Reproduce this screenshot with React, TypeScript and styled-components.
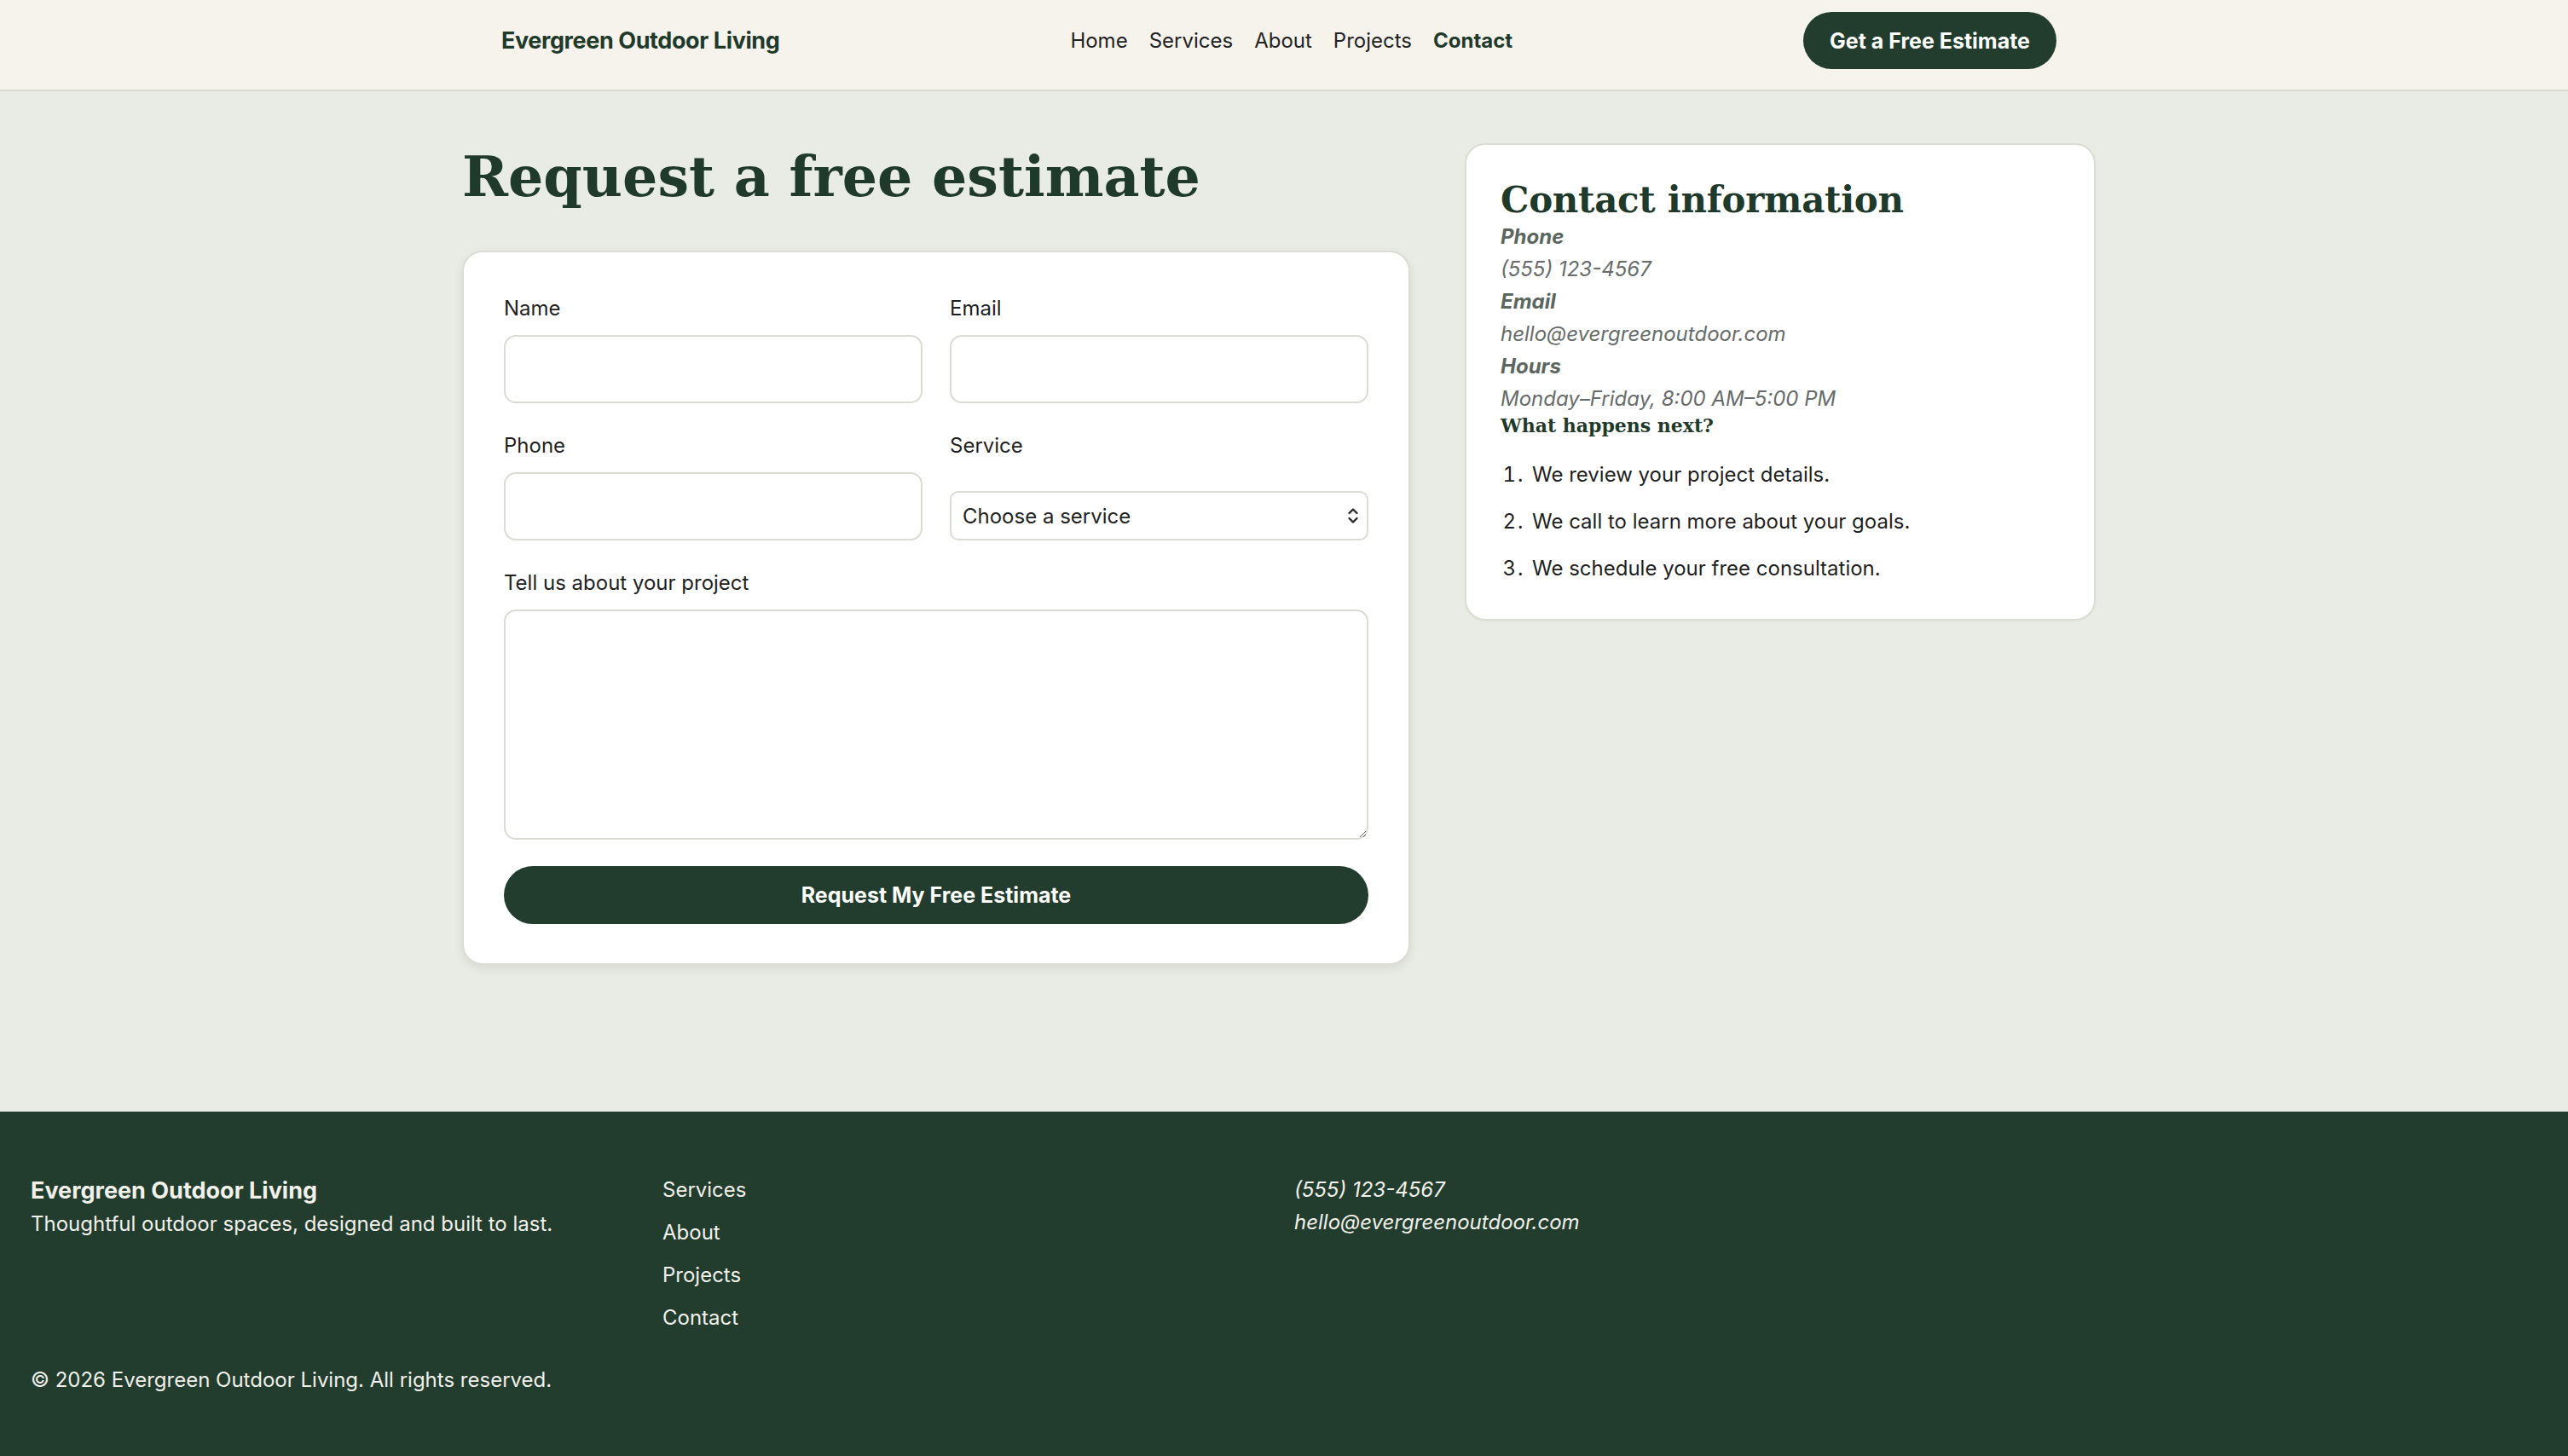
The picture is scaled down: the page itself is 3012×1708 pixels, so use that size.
import styled, { createGlobalStyle } from "styled-components";

const GlobalStyle = createGlobalStyle`
  * {
    box-sizing: border-box;
  }
  body {
    margin: 0;
    background-color: #e9ece5;
    font-family: Inter, "Noto Sans", sans-serif;
    font-size: 24px;
    line-height: 38px;
    color: #1f1f1f;
  }
`;

const Header = styled.header`
  background-color: #f6f3ed;
  border-bottom: 2px solid #dcdcd4;
`;

const Container = styled.div`
  width: 1916px;
  margin-left: calc(50% - 964px);
`;

const HeaderInner = styled(Container)`
  display: flex;
  align-items: center;
  justify-content: space-between;
  padding: 14px 46px 24px;
`;

const Logo = styled.a`
  font-size: 27px;
  font-weight: 700;
  letter-spacing: -0.4px;
  color: #1f3a2b;
  text-decoration: none;
`;

const Nav = styled.nav`
  display: flex;
  gap: 25px;
`;

const NavLink = styled.a<{ $active?: boolean }>`
  font-size: 24px;
  color: ${({ $active }) => ($active ? "#1f3a2b" : "#222")};
  font-weight: ${({ $active }) => ($active ? 700 : 400)};
  text-decoration: none;
`;

const PillButton = styled.button`
  border: none;
  background-color: #223c2e;
  color: #ffffff;
  font-family: Inter, sans-serif;
  font-weight: 700;
  font-size: 25px;
  border-radius: 999px;
  height: 67px;
  padding: 0 31px;
  cursor: pointer;
`;

const Main = styled.main`
  padding: 61px 0 172px;
`;

const Columns = styled(Container)`
  display: grid;
  grid-template-columns: 1112px 1fr;
  gap: 64px;
  align-items: start;
`;

const PageTitle = styled.h1`
  font-family: "DejaVu Serif", "Liberation Serif", serif;
  font-size: 65px;
  line-height: 78px;
  font-weight: 700;
  color: #1f3a2b;
  margin: 0 0 48px;
`;

const Card = styled.div<{ $shadow?: boolean }>`
  background-color: #ffffff;
  border: 2px solid #dcdcd4;
  border-radius: 24px;
  box-shadow: ${({ $shadow }) =>
    $shadow ? "0 4px 12px rgba(0, 0, 0, 0.08)" : "0 1px 3px rgba(0, 0, 0, 0.03)"};
`;

const Form = styled.form`
  display: grid;
  grid-template-columns: 1fr 1fr;
  column-gap: 32px;
  row-gap: 31px;
  padding: 47px 47px 46px;
`;

const Field = styled.label<{ $wide?: boolean }>`
  display: flex;
  flex-direction: column;
  justify-content: space-between;
  gap: 12px;
  grid-column: ${({ $wide }) => ($wide ? "1 / -1" : "auto")};
`;

const LabelText = styled.span`
  font-size: 24px;
  color: #1f1f1f;
`;

const Input = styled.input`
  height: 80px;
  border: 2px solid #dcdcd4;
  border-radius: 14px;
  background: #fff;
  outline: none;
  font-family: Inter, sans-serif;
  font-size: 24px;
  padding: 0 18px;
`;

const SelectWrap = styled.div`
  position: relative;
`;

const Select = styled.select`
  width: 100%;
  height: 58px;
  appearance: none;
  border: 2px solid #dcdcd4;
  border-radius: 10px;
  background: #fff;
  font-family: Inter, sans-serif;
  font-size: 24px;
  color: #222;
  padding: 0 40px 0 13px;
  outline: none;
`;

const SelectIcon = styled.svg`
  position: absolute;
  right: 11px;
  top: 50%;
  transform: translateY(-50%);
  pointer-events: none;
`;

const TextArea = styled.textarea`
  height: 270px;
  border: 2px solid #dcdcd4;
  border-radius: 14px;
  background: #fff;
  outline: none;
  resize: vertical;
  font-family: Inter, sans-serif;
  font-size: 24px;
  padding: 14px 18px;
`;

const SubmitButton = styled(PillButton)`
  grid-column: 1 / -1;
  width: 100%;
  height: 68px;
  font-size: 25px;
`;

const InfoCard = styled(Card)`
  padding: 41px 40px 40px;
`;

const InfoTitle = styled.h2`
  font-family: "DejaVu Serif", "Liberation Serif", serif;
  font-size: 42px;
  line-height: 48px;
  font-weight: 700;
  letter-spacing: -0.3px;
  color: #1f3a2b;
  margin: 0;
`;

const InfoLabel = styled.div`
  font-weight: 700;
  font-style: italic;
  color: #5c6660;
`;

const InfoValue = styled.div`
  font-style: italic;
  color: #676b69;
`;

const SubTitle = styled.h3`
  font-family: "DejaVu Serif", "Liberation Serif", serif;
  font-size: 22px;
  line-height: 28px;
  font-weight: 700;
  color: #1f3a2b;
  margin: -2px 0 0;
`;

const Steps = styled.ol`
  display: flex;
  flex-direction: column;
  gap: 17px;
  margin: 25px 0 0;
  padding-left: 37px;
  color: #1f1f1f;

  li::marker {
    letter-spacing: 2px;
  }
`;

const Footer = styled.footer`
  background-color: #223c2e;
  color: #f1f0ea;
  padding: 73px 36px 80px;
`;

const FooterGrid = styled.div`
  display: grid;
  grid-template-columns: repeat(4, 1fr);
  column-gap: 24px;
`;

const FooterCol = styled.div<{ $gap?: number }>`
  display: flex;
  flex-direction: column;
  gap: ${({ $gap }) => $gap ?? 0}px;
`;

const FooterBrand = styled.div`
  font-size: 27px;
  line-height: 40px;
  font-weight: 700;
`;

const FooterLink = styled.a`
  color: #f1f0ea;
  text-decoration: none;
`;

const FooterItalic = styled.span`
  font-style: italic;
`;

const Copyright = styled.div`
  margin-top: 35px;
`;

export default function App() {
  return (
    <>
      <GlobalStyle />
      <Header>
        <HeaderInner>
          <Logo href="#">Evergreen Outdoor Living</Logo>
          <Nav>
            <NavLink href="#">Home</NavLink>
            <NavLink href="#">Services</NavLink>
            <NavLink href="#">About</NavLink>
            <NavLink href="#">Projects</NavLink>
            <NavLink href="#" $active>
              Contact
            </NavLink>
          </Nav>
          <PillButton>Get a Free Estimate</PillButton>
        </HeaderInner>
      </Header>

      <Main>
        <Columns>
          <section>
            <PageTitle>Request a free estimate</PageTitle>
            <Card $shadow>
              <Form onSubmit={(e) => e.preventDefault()}>
                <Field>
                  <LabelText>Name</LabelText>
                  <Input name="name" />
                </Field>
                <Field>
                  <LabelText>Email</LabelText>
                  <Input name="email" type="email" />
                </Field>
                <Field>
                  <LabelText>Phone</LabelText>
                  <Input name="phone" />
                </Field>
                <Field>
                  <LabelText>Service</LabelText>
                  <SelectWrap>
                    <Select defaultValue="">
                      <option value="">Choose a service</option>
                      <option>Landscape design</option>
                      <option>Patios &amp; hardscaping</option>
                      <option>Decks &amp; pergolas</option>
                    </Select>
                    <SelectIcon width="14" height="24" viewBox="0 0 14 24">
                      <path
                        d="M2.5 9 L7 4.5 L11.5 9 M2.5 15 L7 19.5 L11.5 15"
                        fill="none"
                        stroke="#2a2a2a"
                        strokeWidth="2.4"
                        strokeLinecap="round"
                        strokeLinejoin="round"
                      />
                    </SelectIcon>
                  </SelectWrap>
                </Field>
                <Field $wide>
                  <LabelText>Tell us about your project</LabelText>
                  <TextArea name="details" />
                </Field>
                <SubmitButton type="submit">Request My Free Estimate</SubmitButton>
              </Form>
            </Card>
          </section>

          <InfoCard>
            <InfoTitle>Contact information</InfoTitle>
            <InfoLabel>Phone</InfoLabel>
            <InfoValue>(555) 123-4567</InfoValue>
            <InfoLabel>Email</InfoLabel>
            <InfoValue>hello@evergreenoutdoor.com</InfoValue>
            <InfoLabel>Hours</InfoLabel>
            <InfoValue>Monday–Friday, 8:00 AM–5:00 PM</InfoValue>
            <SubTitle>What happens next?</SubTitle>
            <Steps>
              <li>We review your project details.</li>
              <li>We call to learn more about your goals.</li>
              <li>We schedule your free consultation.</li>
            </Steps>
          </InfoCard>
        </Columns>
      </Main>

      <Footer>
        <FooterGrid>
          <FooterCol>
            <FooterBrand>Evergreen Outdoor Living</FooterBrand>
            <span>Thoughtful outdoor spaces, designed and built to last.</span>
          </FooterCol>
          <FooterCol $gap={12}>
            <FooterLink href="#">Services</FooterLink>
            <FooterLink href="#">About</FooterLink>
            <FooterLink href="#">Projects</FooterLink>
            <FooterLink href="#">Contact</FooterLink>
          </FooterCol>
          <FooterCol>
            <FooterItalic>(555) 123-4567</FooterItalic>
            <FooterItalic>hello@evergreenoutdoor.com</FooterItalic>
          </FooterCol>
        </FooterGrid>
        <Copyright>© 2026 Evergreen Outdoor Living. All rights reserved.</Copyright>
      </Footer>
    </>
  );
}
